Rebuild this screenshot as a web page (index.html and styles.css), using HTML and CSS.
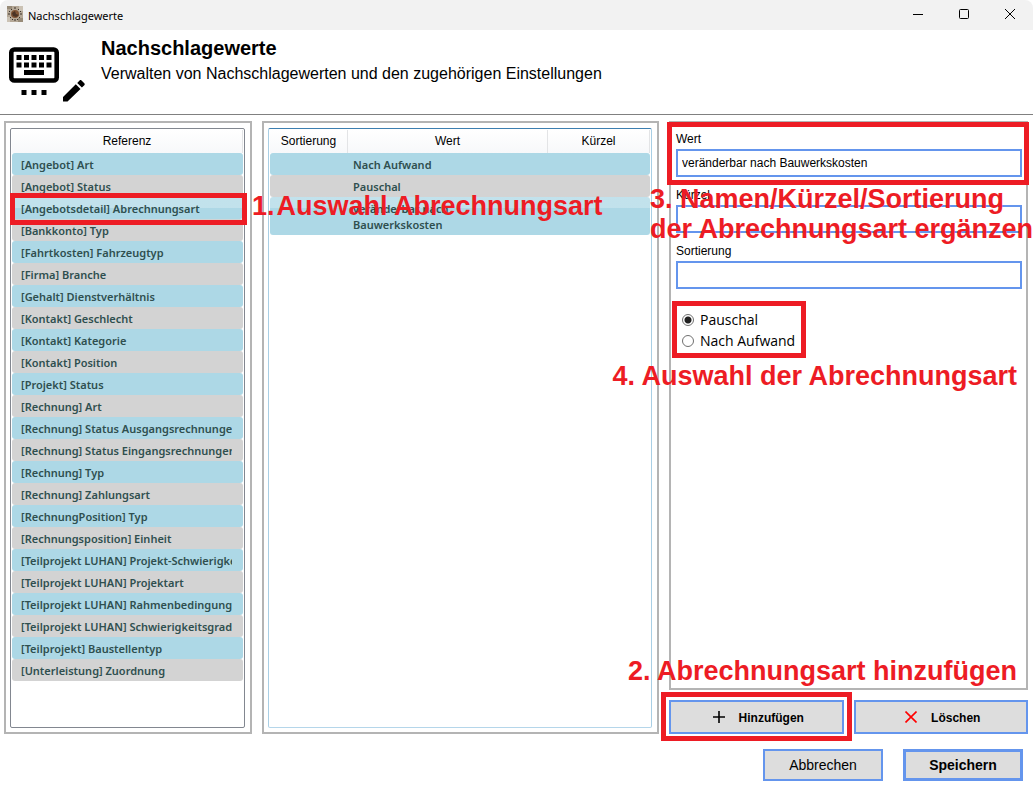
FILE: index.html
```html
<!DOCTYPE html>
<html lang="de">
<head>
    <meta charset="UTF-8">
    <title>Nachschlagewerte</title>
    <link rel="stylesheet" href="styles.css">
</head>
<body>
    <div class="window">
        <div class="titlebar">
            <svg class="app-icon" viewBox="0 0 16 16" aria-hidden="true">
                <rect width="16" height="16" fill="#b5a897"/>
                <path d="M0 0h5v3H0zM11 12h5v4h-5z" fill="#988b78"/>
                <path d="M12 0h4v5h-4zM0 11h3v5H0z" fill="#cbc2b4"/>
                <path d="M8 1v2M4 3l1 1M12 3l-1 1M1 8h2M13 8h2M3 12l1-1M13 12l-1-1M8 13v2M2 5l1 1M14 5l-1 1M5 14l1-1M11 14l-1-1" stroke="#3c332b" fill="none"/>
                <circle cx="8" cy="8" r="4" fill="#805434"/>
                <path d="M5 7l3-2 1 3 3 1-3 2-3-1z" fill="#4a3325"/>
            </svg>
            <span class="titlebar-text">Nachschlagewerte</span>
            <button type="button" class="win-btn" aria-label="Minimieren">
                <svg viewBox="0 0 10 10"><path d="M0 4.5h10"/></svg>
            </button>
            <button type="button" class="win-btn" aria-label="Maximieren">
                <svg viewBox="0 0 10 10"><rect x="0.5" y="-0.5" width="9" height="9" rx="1"/></svg>
            </button>
            <button type="button" class="win-btn" aria-label="Schließen">
                <svg viewBox="0 0 10 10"><path d="M0-1l10 10M10-1L0 9"/></svg>
            </button>
        </div>

        <header class="header">
            <svg class="header-icon" viewBox="0 0 78 56" aria-hidden="true">
                <rect x="2.300" y="2.500" width="45.400" height="31" rx="3" fill="none" stroke="#000" stroke-width="4.600"/>
                <path d="M7.500 8h5v5h-5zM15 8h5v5h-5zM22.500 8h5v5h-5zM30 8h5v5h-5zM37.500 8h5v5h-5zM7.500 15.500h5v5h-5zM15 15.500h5v5h-5zM22.500 15.500h5v5h-5zM30 15.500h5v5h-5zM37.500 15.500h5v5h-5zM15 23h20v5H15zM12.500 43h5v5h-5zM22.500 43h5v5h-5zM32.500 43h5v5h-5z"/>
                <path d="M54 50v4.500h4.500L71.500 42l-4.700-4.700zM75.300 38.200c.6-.6.600-1.300 0-1.900l-2.800-2.800c-.6-.6-1.300-.6-1.900 0l-2.400 2.400 4.700 4.700z"/>
            </svg>
            <div>
                <h1>Nachschlagewerte</h1>
                <p>Verwalten von Nachschlagewerten und den zugehörigen Einstellungen</p>
            </div>
        </header>

        <main class="content">
            <section class="panel">
                <div class="list">
                    <table class="grid">
                        <thead>
                            <tr><th>Referenz</th></tr>
                        </thead>
                        <tbody>
                            <tr><td>[Angebot] Art</td></tr>
                            <tr><td>[Angebot] Status</td></tr>
                            <tr class="selected"><td>[Angebotsdetail] Abrechnungsart</td></tr>
                            <tr><td>[Bankkonto] Typ</td></tr>
                            <tr><td>[Fahrtkosten] Fahrzeugtyp</td></tr>
                            <tr><td>[Firma] Branche</td></tr>
                            <tr><td>[Gehalt] Dienstverhältnis</td></tr>
                            <tr><td>[Kontakt] Geschlecht</td></tr>
                            <tr><td>[Kontakt] Kategorie</td></tr>
                            <tr><td>[Kontakt] Position</td></tr>
                            <tr><td>[Projekt] Status</td></tr>
                            <tr><td>[Rechnung] Art</td></tr>
                            <tr><td><div class="clip">[Rechnung] Status Ausgangsrechnungen</div></td></tr>
                            <tr><td><div class="clip">[Rechnung] Status Eingangsrechnungen</div></td></tr>
                            <tr><td>[Rechnung] Typ</td></tr>
                            <tr><td>[Rechnung] Zahlungsart</td></tr>
                            <tr><td>[RechnungPosition] Typ</td></tr>
                            <tr><td>[Rechnungsposition] Einheit</td></tr>
                            <tr><td><div class="clip">[Teilprojekt LUHAN] Projekt-Schwierigkeit</div></td></tr>
                            <tr><td>[Teilprojekt LUHAN] Projektart</td></tr>
                            <tr><td><div class="clip">[Teilprojekt LUHAN] Rahmenbedingungen</div></td></tr>
                            <tr><td><div class="clip">[Teilprojekt LUHAN] Schwierigkeitsgrade</div></td></tr>
                            <tr><td>[Teilprojekt] Baustellentyp</td></tr>
                            <tr><td>[Unterleistung] Zuordnung</td></tr>
                        </tbody>
                    </table>
                    <span class="mark mark-row"></span>
                </div>
            </section>

            <section class="panel">
                <div class="list list-active">
                    <table class="grid">
                        <colgroup>
                            <col class="col-sort">
                            <col class="col-value">
                            <col>
                        </colgroup>
                        <thead>
                            <tr><th>Sortierung</th><th>Wert</th><th>Kürzel</th></tr>
                        </thead>
                        <tbody>
                            <tr><td></td><td>Nach Aufwand</td><td></td></tr>
                            <tr><td></td><td>Pauschal</td><td></td></tr>
                            <tr class="selected"><td></td><td>veränderbar nach<br>Bauwerkskosten</td><td></td></tr>
                        </tbody>
                    </table>
                </div>
                <p class="note note-1"><span>1.</span><span>Auswahl Abrechnungsart</span></p>
            </section>

            <div class="side">
                <form class="panel form" id="valueForm">
                    <div class="field">
                        <label for="wert">Wert</label>
                        <input type="text" id="wert" value="veränderbar nach Bauwerkskosten">
                        <span class="mark mark-field"></span>
                    </div>
                    <div class="field">
                        <label for="kuerzel">Kürzel</label>
                        <input type="text" id="kuerzel">
                    </div>
                    <div class="field">
                        <label for="sortierung">Sortierung</label>
                        <input type="text" id="sortierung">
                    </div>
                    <div class="radios">
                        <label><input type="radio" name="art" checked>Pauschal</label>
                        <label><input type="radio" name="art">Nach Aufwand</label>
                        <span class="mark mark-radios"></span>
                    </div>
                    <p class="note note-3">3. Namen/Kürzel/Sortierung<br>der Abrechnungsart ergänzen</p>
                    <p class="note note-4">4. Auswahl der Abrechnungsart</p>
                    <p class="note note-2">2. Abrechnungsart hinzufügen</p>
                </form>
                <div class="actions">
                    <div class="action">
                        <button type="button" class="btn btn-small">
                            <svg viewBox="0 0 12 12" aria-hidden="true"><path d="M6 0v12M0 6h12" stroke="#000" stroke-width="1.600"/></svg>
                            Hinzufügen
                        </button>
                        <span class="mark mark-add"></span>
                    </div>
                    <div class="action">
                        <button type="button" class="btn btn-small">
                            <svg viewBox="0 0 12 12" aria-hidden="true"><path d="M0.500 0.500l11 11M11.500 0.500l-11 11" stroke="#f00" stroke-width="1.600"/></svg>
                            Löschen
                        </button>
                    </div>
                </div>
            </div>
        </main>

        <footer class="footer">
            <button type="button" class="btn">Abbrechen</button>
            <button type="submit" form="valueForm" class="btn btn-default">Speichern</button>
        </footer>
    </div>
</body>
</html>
```
FILE: styles.css
```css
* {
    box-sizing: border-box;
}
body {
    margin: 0;
    font-family: "Liberation Sans", Arial, sans-serif;
    font-size: 12px;
    color: #000;
    background-color: #fff;
}
h1, p {
    margin: 0;
}
.window {
    display: flex;
    flex-direction: column;
    min-height: 100vh;
    overflow: hidden;
}

/* title bar */
.titlebar {
    display: flex;
    align-items: center;
    height: 30px;
    padding-left: 7px;
    background-color: #f2f2f2;
    border-radius: 8px 8px 0 0;
}
.app-icon {
    width: 16px;
    height: 16px;
    margin-bottom: 2px;
}
.titlebar-text {
    flex: 1;
    margin-left: 5px;
    font-family: "Noto Sans", "Segoe UI", sans-serif;
    font-size: 11px;
}
.win-btn {
    display: flex;
    align-items: center;
    justify-content: center;
    width: 46px;
    height: 30px;
    padding: 0;
    border: none;
    background: none;
}
.win-btn svg {
    width: 10px;
    height: 10px;
    fill: none;
    stroke: #000;
    overflow: visible;
}

/* header */
.header {
    display: flex;
    gap: 14px;
    height: 85px;
    padding: 6px 9px;
    border-bottom: 1px solid #808080;
}
.header-icon {
    width: 78px;
    height: 56px;
    margin-top: 11px;
}
.header h1 {
    font-size: 20px;
    line-height: 24px;
}
.header p {
    font-size: 16px;
    line-height: 28px;
}

/* main area */
.content {
    flex: 1;
    display: grid;
    grid-template-columns: 248px 1fr 359px;
    gap: 10px;
    padding: 6px 5px 0 4px;
}
.panel {
    position: relative;
    display: flex;
    flex-direction: column;
    padding: 5px 5px 4px 4px;
    border: 2px solid #b4b4b4;
}
.list {
    flex: 1;
    position: relative;
    padding: 1px;
    border: 1px solid #828790;
    border-radius: 2px;
}
.list-active {
    border-color: #3c7fb1 #a9cfe5 #b5d6ea;
}
.grid {
    width: 100%;
    table-layout: fixed;
    border-collapse: separate;
    border-spacing: 0;
}
.col-sort {
    width: 78px;
}
.col-value {
    width: 200px;
}
.grid th {
    height: 23px;
    padding: 0 0 2px;
    font-weight: normal;
    background: linear-gradient(#fff, #f7f8fa);
    border-right: 1px solid #e3e4e6;
}
.grid td {
    height: 22px;
    padding: 4px 11px 2px 9px;
    font-family: "Noto Sans", "Segoe UI", sans-serif;
    font-size: 11px;
    font-weight: 600;
    line-height: 16px;
    white-space: nowrap;
    color: #2f4f4f;
    background-color: #d3d3d3;
}
.grid td + td {
    padding-left: 5px;
}
.grid td:first-child {
    border-radius: 3px 0 0 3px;
}
.grid td:last-child {
    border-radius: 0 3px 3px 0;
}
.grid td:only-child {
    border-radius: 3px;
}
.grid tr:nth-child(odd) td {
    background-color: #add8e6;
}
.grid .selected td {
    background-image: linear-gradient(rgba(255, 255, 255, 0.25) 50%, transparent 50%);
}
.list-active .selected td {
    background-image: linear-gradient(rgba(255, 255, 255, 0.25) 30%, transparent 30%);
}
.clip {
    overflow: hidden;
}

/* right column */
.side {
    display: flex;
    flex-direction: column;
    gap: 10px;
}
.form {
    flex: 1;
    padding: 6px 4px 6px 5px;
}
.field {
    position: relative;
    margin-bottom: 8px;
}
.field label {
    display: block;
    line-height: 20px;
}
.field input {
    display: block;
    width: 100%;
    height: 28px;
    padding: 0 4px;
    font: inherit;
    border: 2px solid #6495ed;
    outline: none;
}
.radios {
    position: relative;
    align-self: flex-start;
    margin-top: 12px;
    padding: 0 7px 0 6px;
    font-family: "Open Sans", "Segoe UI", sans-serif;
    font-size: 14px;
}
.radios label {
    display: flex;
    align-items: center;
    gap: 6px;
    height: 21px;
}
.radios input {
    appearance: none;
    width: 12px;
    height: 12px;
    margin: 0;
    border: 1px solid #707070;
    border-radius: 50%;
    background-color: #fff;
}
.radios input:checked {
    background: radial-gradient(circle, #212121 3px, #fff 4px);
}
.actions {
    display: grid;
    grid-template-columns: 1fr 1fr;
    gap: 10px;
}
.action {
    position: relative;
    display: flex;
}

/* buttons */
.btn {
    width: 120px;
    height: 32px;
    padding: 0;
    font-family: inherit;
    font-size: 14px;
    color: #000;
    background-color: #ddd;
    border: 2px solid #6495ed;
}
.btn-default {
    font-weight: bold;
    border-width: 3px;
}
.btn-small {
    display: flex;
    align-items: center;
    justify-content: center;
    gap: 14px;
    width: 100%;
    height: 34px;
    padding: 2px 0 0 4px;
    font-size: 12px;
    font-weight: bold;
}
.btn-small svg {
    width: 12px;
    height: 12px;
    margin-bottom: 3px;
}
.footer {
    display: flex;
    justify-content: flex-end;
    gap: 20px;
    padding: 15px 10px 6px;
}

/* red tutorial marks */
.mark {
    position: absolute;
    border: 5px solid #ed1c24;
    pointer-events: none;
}
.mark-row {
    top: 64px;
    left: -1px;
    right: -3px;
    height: 32px;
}
.mark-field {
    top: -7px;
    right: -7px;
    bottom: -8px;
    left: -9px;
}
.mark-radios {
    top: -8px;
    right: -4px;
    bottom: -7px;
    left: -4px;
}
.mark-add {
    top: -8px;
    right: -8px;
    bottom: -7px;
    left: -8px;
}
.note {
    position: absolute;
    z-index: 1;
    font-size: 27px;
    font-weight: bold;
    line-height: 30px;
    white-space: nowrap;
    color: #ed1c24;
    pointer-events: none;
}
.note-1 {
    display: flex;
    gap: 2px;
    top: 68px;
    left: -12px;
}
.note-2 {
    right: 9px;
    bottom: 2px;
}
.note-3 {
    top: 61px;
    left: -21px;
}
.note-4 {
    top: 238px;
    right: 9px;
}
```
